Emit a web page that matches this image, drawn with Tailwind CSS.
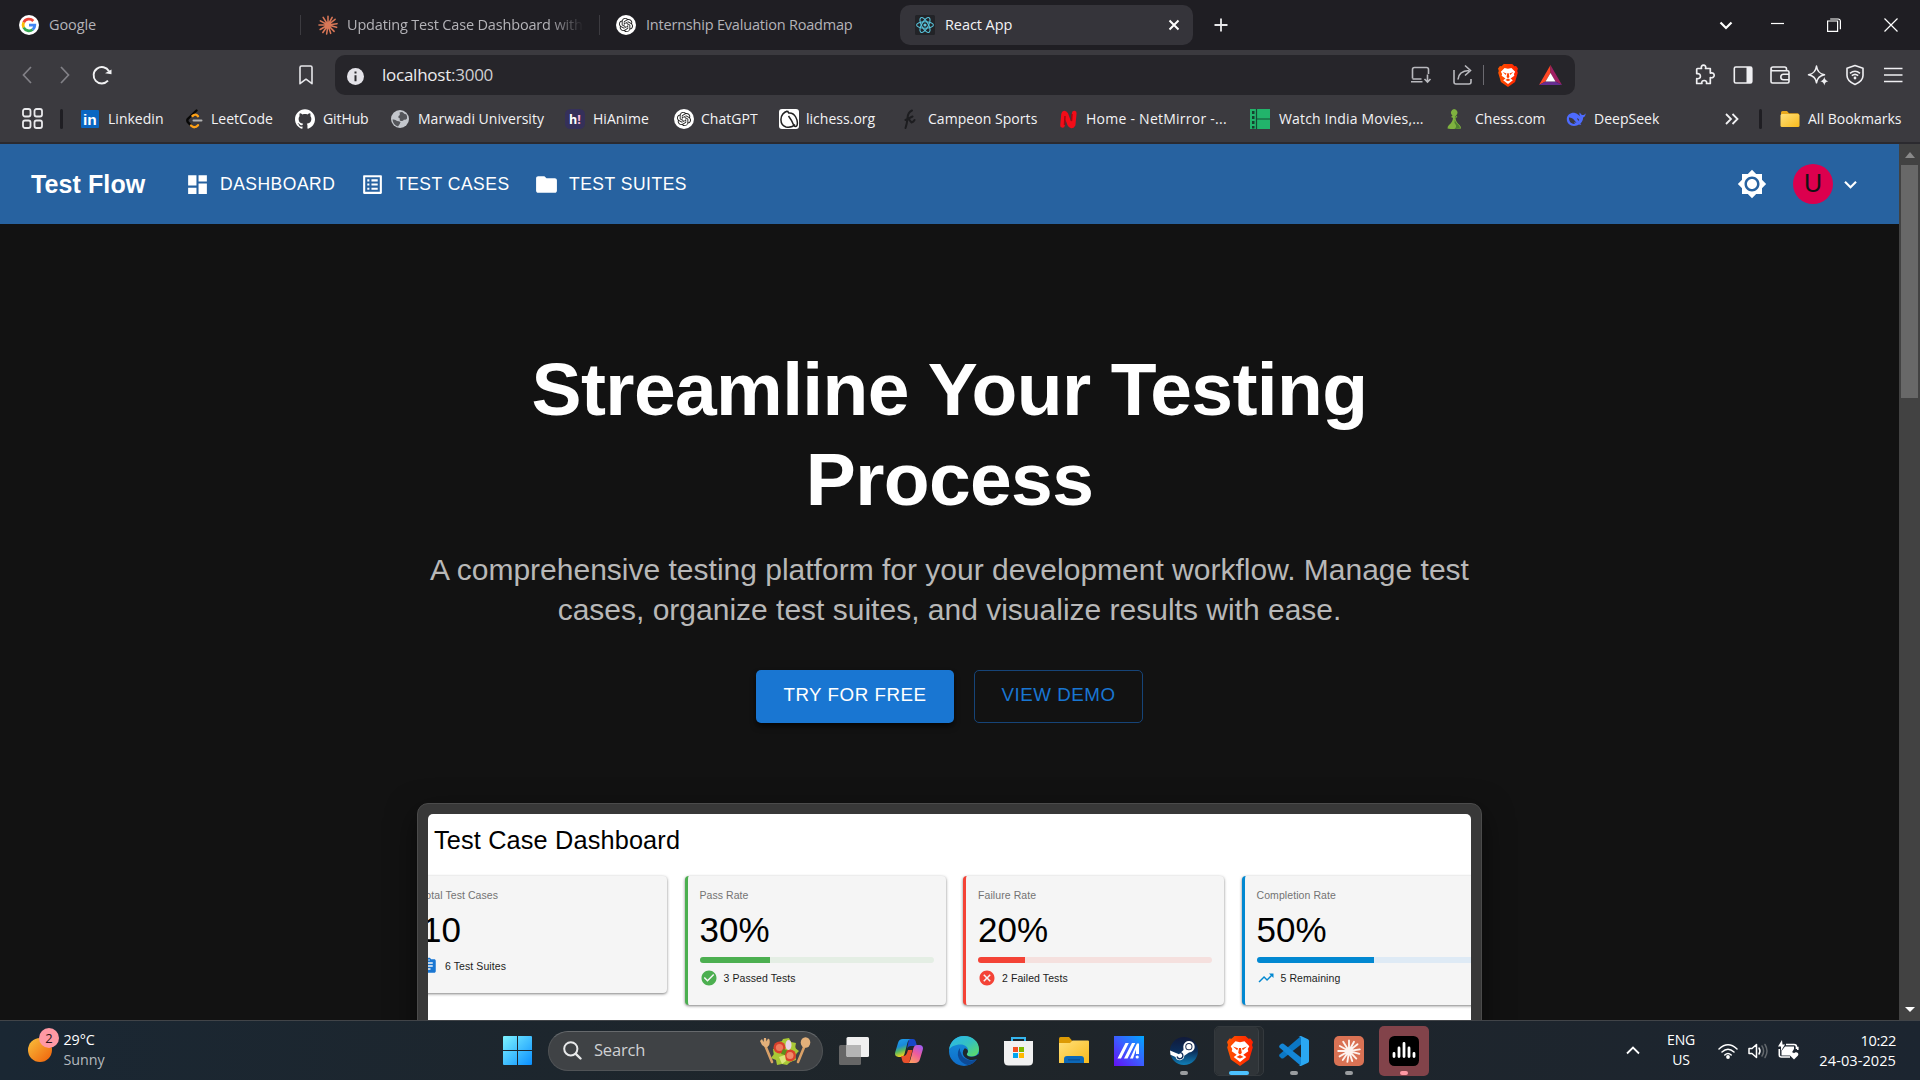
<!DOCTYPE html>
<html lang="en">
<head>
<meta charset="utf-8">
<title>React App</title>
<script src="https://cdn.jsdelivr.net/npm/@tailwindcss/browser@4"></script>
</head>
<body class="w-[1920px] h-[1080px] overflow-hidden bg-[#121212] flex flex-col font-['Open_Sans',sans-serif]">

<!-- Shared symbols -->
<svg class="absolute size-0">
  <defs>
    <linearGradient id="braveG" x1="0" y1="0" x2="1" y2="0"><stop offset="0" stop-color="#ff5500"/><stop offset="1" stop-color="#ff2000"/></linearGradient>
    <linearGradient id="winG" x1="0" y1="0" x2="1" y2="1"><stop offset="0" stop-color="#7df3ff"/><stop offset="1" stop-color="#0a8fff"/></linearGradient>
    <linearGradient id="sunG" x1="0" y1="0" x2="1" y2="1"><stop offset="0" stop-color="#f9c13c"/><stop offset="1" stop-color="#ef5f0a"/></linearGradient>
    <linearGradient id="edgeA" x1="0" y1="0" x2="1" y2="1"><stop offset="0" stop-color="#2ab7ef"/><stop offset=".5" stop-color="#35c1c0"/><stop offset="1" stop-color="#62e05a"/></linearGradient>
    <linearGradient id="edgeB" x1="0" y1="0" x2="0" y2="1"><stop offset="0" stop-color="#1590dc"/><stop offset="1" stop-color="#0f6cc8"/></linearGradient>
    <linearGradient id="copA" x1="0" y1="0" x2=".3" y2="1"><stop offset="0" stop-color="#1fa0f0"/><stop offset=".45" stop-color="#1b8ad8"/><stop offset=".7" stop-color="#57b860"/><stop offset="1" stop-color="#f3d21c"/></linearGradient>
    <linearGradient id="copB" x1=".8" y1="0" x2=".2" y2="1"><stop offset="0" stop-color="#a25cf0"/><stop offset=".45" stop-color="#ee5b9c"/><stop offset="1" stop-color="#ffa35c"/></linearGradient>
    <linearGradient id="maG" x1="0" y1="1" x2="1" y2="0"><stop offset="0" stop-color="#6410f4"/><stop offset=".5" stop-color="#3c5cff"/><stop offset="1" stop-color="#00a8ff"/></linearGradient>
    <linearGradient id="steamG" x1="0" y1="0" x2="0" y2="1"><stop offset="0" stop-color="#111a3a"/><stop offset=".5" stop-color="#0b2c58"/><stop offset="1" stop-color="#1080b8"/></linearGradient>
    <linearGradient id="foldG" x1="0" y1="0" x2="1" y2="1"><stop offset="0" stop-color="#ffe07a"/><stop offset="1" stop-color="#f8ba1c"/></linearGradient>
    <symbol id="openai" viewBox="-5 -5 34 34"><circle cx="12" cy="12" r="17" fill="#fff"/><path fill="#222" d="M22.2819 9.8211a5.9847 5.9847 0 0 0-.5157-4.9108 6.0462 6.0462 0 0 0-6.5098-2.9A6.0651 6.0651 0 0 0 4.9807 4.1818a5.9847 5.9847 0 0 0-3.9977 2.9 6.0462 6.0462 0 0 0 .7427 7.0966 5.98 5.98 0 0 0 .511 4.9107 6.051 6.051 0 0 0 6.5146 2.9001A5.9847 5.9847 0 0 0 13.2599 24a6.0557 6.0557 0 0 0 5.7718-4.2058 5.9894 5.9894 0 0 0 3.9977-2.9001 6.0557 6.0557 0 0 0-.7475-7.0729zm-9.022 12.6081a4.4755 4.4755 0 0 1-2.8764-1.0408l.1419-.0804 4.7783-2.7582a.7948.7948 0 0 0 .3927-.6813v-6.7369l2.02 1.1686a.071.071 0 0 1 .038.052v5.5826a4.504 4.504 0 0 1-4.4945 4.4944zm-9.6607-4.1254a4.4708 4.4708 0 0 1-.5346-3.0137l.142.0852 4.783 2.7582a.7712.7712 0 0 0 .7806 0l5.8428-3.3685v2.3324a.0804.0804 0 0 1-.0332.0615L9.74 19.9502a4.4992 4.4992 0 0 1-6.1408-1.6464zM2.3408 7.8956a4.485 4.485 0 0 1 2.3655-1.9728V11.6a.7664.7664 0 0 0 .3879.6765l5.8144 3.3543-2.0201 1.1685a.0757.0757 0 0 1-.071 0l-4.8303-2.7865A4.504 4.504 0 0 1 2.3408 7.872zm16.5963 3.8558L13.1038 8.364 15.1192 7.2a.0757.0757 0 0 1 .071 0l4.8303 2.7913a4.4944 4.4944 0 0 1-.6765 8.1042v-5.6772a.79.79 0 0 0-.407-.667zm2.0107-3.0231l-.142-.0852-4.7735-2.7818a.7759.7759 0 0 0-.7854 0L9.409 9.2297V6.8974a.0662.0662 0 0 1 .0284-.0615l4.8303-2.7866a4.4992 4.4992 0 0 1 6.6802 4.66zM8.3065 12.863l-2.02-1.1638a.0804.0804 0 0 1-.038-.0567V6.0742a4.4992 4.4992 0 0 1 7.3757-3.4537l-.142.0805L8.704 5.459a.7948.7948 0 0 0-.3927.6813zm1.0976-2.3654l2.602-1.4998 2.6069 1.4998v2.9994l-2.5974 1.4997-2.6067-1.4997Z"/></symbol>
    <symbol id="burst" viewBox="0 0 24 24"><g stroke="currentColor" stroke-width="1.900" stroke-linecap="round"><path d="M12 12V1.500M12 12l5-9.200M12 12l8.500-6.800M12 12l10.800-1.600M12 12l10.300 2.800M12 12l7.300 7.600M12 12l3.200 10M12 12l-1.600 10.800M12 12l-6.200 9M12 12l-9.400 5.400M12 12H1.200M12 12L2.800 7M12 12L6.200 2.800"/></g></symbol>
    <symbol id="brave" viewBox="0 0 26 30"><path fill="url(#braveG)" d="M7.500 0h11l3 2.800 2-.3L26 6l-1 3 .8 2.500-3.600 12L13 30l-9.200-6.500L.2 11.500 1 9 0 6l2.500-3.500 2 .3z"/><path fill="#fff" d="M13 6.200l4.500-1 4.800 5-1.600 2.700.6 2.300-5 3.600 3 2.300L13 26l-6.300-4.900 3-2.300-5-3.600.6-2.300L3.700 10.200l4.800-5z"/><path fill="#ff4000" d="M6 10.500l5 1.800-.8 2zM20 10.500l-5 1.800.8 2zM12 12h2l.8 5-1.800 1.500L11.200 17zM9.500 21l3.500-2 3.500 2-3.500 1.500z"/></symbol>
  </defs>
</svg>

<!-- Tab strip -->
<div class="h-[50px] shrink-0 bg-[#1f1e23] flex items-center text-[14.5px] tracking-[-0.08px] text-[#b4b3b8] whitespace-nowrap">
  <div class="w-[300px] pl-[19px] flex items-center gap-2.5">
    <svg class="size-5" viewBox="0 0 20 20"><circle cx="10" cy="10" r="10" fill="#fff"/><g fill="none" stroke-width="2.800"><path stroke="#ea4335" d="M14.300 6A5.900 5.900 0 0 0 4.700 7.500"/><path stroke="#fbbc05" d="M4.700 7.400a5.900 5.900 0 0 0 0 5.200"/><path stroke="#34a853" d="M4.700 12.500a5.900 5.900 0 0 0 9 2"/><path stroke="#4285f4" d="M10 10.200h5.800a5.900 5.900 0 0 1-2.100 4.400"/></g></svg>
    <span>Google</span>
  </div>
  <div class="w-px h-5 bg-[#3c3b40]"></div>
  <div class="w-[298px] pl-[17px] flex items-center gap-[9px]">
    <svg class="size-5 text-[#d97757]"><use href="#burst"/></svg>
    <span class="w-[237px] overflow-hidden tracking-[-0.17px] mask-r-from-85%">Updating Test Case Dashboard with</span>
  </div>
  <div class="w-px h-5 bg-[#3c3b40]"></div>
  <div class="w-[300px] pl-4 flex items-center gap-2.5">
    <svg class="size-5"><use href="#openai"/></svg>
    <span class="tracking-[-0.2px]">Internship Evaluation Roadmap</span>
  </div>
  <div class="w-[293px] h-10 rounded-[10px] bg-[#35343a] pl-[15px] pr-3 flex items-center gap-2.5 text-[#f2f2f4]">
    <svg class="size-5" viewBox="0 0 20 20"><rect width="20" height="20" rx="1.500" fill="#222327"/><g fill="none" stroke="#58c4dc" stroke-width="1.100"><ellipse cx="10" cy="10" rx="8.400" ry="3.300"/><ellipse cx="10" cy="10" rx="8.400" ry="3.300" transform="rotate(60 10 10)"/><ellipse cx="10" cy="10" rx="8.400" ry="3.300" transform="rotate(120 10 10)"/></g><circle cx="10" cy="10" r="1.600" fill="#58c4dc"/></svg>
    <span class="grow">React App</span>
    <svg class="size-[14px]" viewBox="0 0 14 14"><path stroke="#fff" stroke-width="2" d="M2.500 2.500l9 9m0-9l-9 9"/></svg>
  </div>
  <svg class="ml-[21px] size-[14px]" viewBox="0 0 14 14"><path stroke="#e8e8ea" stroke-width="1.800" d="M7 .5v13M.5 7h13"/></svg>
  <div class="grow"></div>
  <svg class="mr-[38px] size-[14px]" viewBox="0 0 14 14"><path fill="none" stroke="#fff" stroke-width="2.200" d="M1.500 4.500L7 10l5.500-5.500"/></svg>
  <svg class="mr-[43px] w-[13px] h-[14px]" viewBox="0 0 13 14"><path stroke="#fff" stroke-width="1.200" d="M0 5.500h13"/></svg>
  <svg class="mr-[43px] size-[14px]" viewBox="0 0 14 14"><path fill="none" stroke="#fff" stroke-width="1.200" d="M.6 3h10v10.400H.6zM3.200 1h8a2.200 2.200 0 0 1 2.200 2.200v8"/></svg>
  <svg class="mr-[22px] size-[14px]" viewBox="0 0 14 14"><path stroke="#fff" stroke-width="1.200" d="M.5 .5l13 13m0-13l-13 13"/></svg>
</div>

<!-- Address toolbar -->
<div class="h-[50px] shrink-0 bg-[#3b3a3f] flex items-center">
  <svg class="ml-[22px] w-[10px] h-[18px]" viewBox="0 0 10 18"><path fill="none" stroke="#828187" stroke-width="1.700" d="M9 1L1.500 9 9 17"/></svg>
  <svg class="ml-[28px] w-[10px] h-[18px]" viewBox="0 0 10 18"><path fill="none" stroke="#828187" stroke-width="1.700" d="M1 1l7.500 8L1 17"/></svg>
  <svg class="ml-[22px] size-[20px]" viewBox="0 0 20 20"><path fill="none" stroke="#f1f1f3" stroke-width="1.900" d="M17 6.300A8.200 8.200 0 1 0 16 15.700"/><path fill="#f1f1f3" d="M19.500 4.500V9.300L13 8.200z"/></svg>
  <svg class="ml-[186px] w-[16px] h-[20px]" viewBox="0 0 16 20"><path fill="none" stroke="#e6e6ea" stroke-width="1.600" stroke-linejoin="round" d="M3.500 1h9Q14 1 14 2.500V18.700L8 14.200 2 18.700V2.500Q2 1 3.500 1z"/></svg>
  <div class="ml-[21px] w-[1240px] h-10 rounded-[10px] bg-[#26252a] flex items-center pl-[12px] pr-[13px]">
    <svg class="size-[17px] mt-0.5" viewBox="0 0 17 17"><circle cx="8.500" cy="8.500" r="8.500" fill="#e4e3e9"/><path stroke="#2d2c31" stroke-width="2" d="M8.500 3.500v2M8.500 7.200v6"/></svg>
    <span class="grow ml-[18px] text-[17px] tracking-[-0.25px] text-[#cfcfd2] whitespace-nowrap"><span class="text-[#ececee]">localhost</span>:3000</span>
    <svg class="w-[22px] h-[20px]" viewBox="0 0 22 20"><g fill="none" stroke="#b9b9be" stroke-width="1.600"><path d="M2.500 13.500v-9Q2.500 2.500 4.500 2.500h12Q18.500 2.500 18.500 4.500V9M1 16.800h11.500M2.500 14h9M17.500 9.500v7.500M14.500 14l3 3 3-3"/></g></svg>
    <svg class="ml-[20px] w-[22px] h-[22px]" viewBox="0 0 22 22"><path fill="none" stroke="#b9b9be" stroke-width="1.600" d="M2 6v12Q2 20 4 20h13Q19 20 19 18V15M6 15.500Q6.500 7 17 6.500M13 1.500l5.500 5-5.500 5"/></svg>
    <div class="ml-[9px] w-[1.500px] h-5 bg-[#6b6a70]"></div>
    <svg class="ml-[14px] w-[20px] h-[23px]"><use href="#brave"/></svg>
    <svg class="ml-[21px] w-[23px] h-[20px]" viewBox="0 0 23 20"><path fill="#ff4724" d="M11.500 0v8L6.500 16.500 0 20z"/><path fill="#9e1f63" d="M11.500 0L23 20l-6.500-3.500L11.500 8z"/><path fill="#662d91" d="M0 20l6.500-3.500h10L23 20z"/><path fill="#fff" d="M11.500 8l5 8.500h-10z"/></svg>
  </div>
  <div class="ml-[119px] flex items-center gap-[15.600px] text-[#efeff2]">
    <svg class="size-[22px]" viewBox="0 0 22 22"><path fill="none" stroke="currentColor" stroke-width="1.700" stroke-linejoin="round" d="M3.500 4.500h4c-.8-2.200.6-3.300 2-3.300s2.900 1.100 2 3.300h4.800v4.600c2.400-.8 3.900.5 3.900 2.200s-1.500 3-3.900 2.200v6H12.500c.6-2-.7-3-2.300-3s-3 1-2.300 3H2.700v-4.800c2.800.4 3.700-.9 3.700-2.500S5.300 9.200 2.700 9.700V5.300q0-.8.8-.8z"/></svg>
    <svg class="size-[22px]" viewBox="0 0 22 22"><rect x="2.300" y="3" width="17.500" height="16" rx="1.500" fill="none" stroke="currentColor" stroke-width="1.600"/><path fill="currentColor" d="M14.500 3h5v16h-5z"/></svg>
    <svg class="size-[22px]" viewBox="0 0 22 22"><path fill="none" stroke="currentColor" stroke-width="1.600" d="M17.500 6.800V5Q17.500 3 15.500 3H4Q2 3 2 5v12.500q0 1.500 1.500 1.500h15q1.500 0 1.500-1.500V8.300q0-1.500-1.500-1.500H4Q2 6.800 2 5M20 10.300h-5.500a2.500 2.500 0 0 0 0 5.400H20"/></svg>
    <svg class="size-[22px]" viewBox="0 0 22 22"><path fill="none" stroke="currentColor" stroke-width="1.500" stroke-linejoin="round" d="M9.500 2q1 7.600 8 8.800-7 1.200-8 8-1-6.800-8-8Q8.500 9.600 9.500 2z"/><path fill="currentColor" d="M17.300 13q.6 3.600 4 4.200-3.400.6-4 4.200-.6-3.600-4-4.200 3.400-.6 4-4.200z"/></svg>
    <svg class="size-[22px]" viewBox="0 0 22 22"><g fill="none" stroke="currentColor" stroke-width="1.600"><path stroke-linejoin="round" d="M11 1.500l8 2.700v7.300q0 5.700-8 9-8-3.300-8-9V4.200z"/><path d="M6 9.300q5-4 10 0M7.800 11.700q3.200-2.600 6.400 0"/></g><circle cx="11" cy="14" r="1.400" fill="currentColor"/></svg>
    <svg class="w-[22px] h-[22px]" viewBox="0 0 22 22"><path stroke="currentColor" stroke-width="1.700" d="M2 4.500h18.500M2 11h18.500M2 17.500h18.500"/></svg>
  </div>
</div>

<!-- Bookmarks bar -->
<div class="h-[44px] shrink-0 bg-[#3b3a3f] border-b-2 border-[#2b2a2f] pb-[5px] flex items-center text-[14px] tracking-[0.02px] text-[#f3f3f5] whitespace-nowrap">
  <svg class="ml-[22px] size-[21px] shrink-0" viewBox="0 0 21 21"><g fill="none" stroke="#e9e9ec" stroke-width="1.800"><rect x="1" y="1" width="7.500" height="7.500" rx="2"/><rect x="12.500" y="1" width="7.500" height="7.500" rx="2"/><rect x="1" y="12.500" width="7.500" height="7.500" rx="2"/><rect x="12.500" y="12.500" width="7.500" height="7.500" rx="2"/></g></svg>
  <div class="ml-[17px] w-[3px] h-5 rounded bg-[#1f1e23] mr-[17px]"></div>
  <div class="w-[105px] flex items-center gap-[8px]"><svg class="size-5 shrink-0" viewBox="0 0 20 20"><rect x="1" y="1" width="18" height="18" rx="1" fill="#0a66c2"/><text x="3" y="16" font-family="Liberation Sans" font-weight="700" font-size="15.500" fill="#fff">in</text></svg><span>Linkedin</span></div>
  <div class="w-[110px] flex items-center gap-[6px]"><svg class="size-5 shrink-0" viewBox="0 0 20 20"><g fill="none" stroke-width="2.400" stroke-linecap="round"><path stroke="#070706" d="M11.500 1.500L2.800 10q-1 1.500 0 3l2.500 2.700"/><path stroke="#ffa116" d="M6 16.500q3.500 3.500 7-.3M7.500 7q3-2.800 5.500.2"/><path stroke="#b3b3b3" stroke-width="2" d="M8.500 11.500h8"/></g></svg><span>LeetCode</span></div>
  <div class="w-[95px] flex items-center gap-[8px]"><svg class="size-5 shrink-0" viewBox="0 0 24 24"><path fill="#fff" d="M12 .297c-6.630 0-12 5.373-12 12 0 5.303 3.438 9.800 8.205 11.385.6.113.82-.258.82-.577 0-.285-.01-1.040-.015-2.040-3.338.724-4.042-1.610-4.042-1.610C4.422 18.070 3.633 17.700 3.633 17.700c-1.087-.744.084-.729.084-.729 1.205.084 1.838 1.236 1.838 1.236 1.070 1.835 2.809 1.305 3.495.998.108-.776.417-1.305.76-1.605-2.665-.3-5.466-1.332-5.466-5.930 0-1.310.465-2.380 1.235-3.220-.135-.303-.54-1.523.105-3.176 0 0 1.005-.322 3.300 1.230.96-.267 1.980-.399 3-.405 1.020.006 2.040.138 3 .405 2.280-1.552 3.285-1.230 3.285-1.230.645 1.653.24 2.873.12 3.176.765.840 1.230 1.910 1.230 3.220 0 4.610-2.805 5.625-5.475 5.920.42.360.81 1.096.81 2.220 0 1.606-.015 2.896-.015 3.286 0 .315.21.690.825.570C20.565 22.092 24 17.592 24 12.297c0-6.627-5.373-12-12-12"/></svg><span class="tracking-[-0.1px]">GitHub</span></div>
  <div class="w-[175px] flex items-center gap-[8px]"><svg class="size-5 shrink-0" viewBox="0 0 20 20"><circle cx="10" cy="10" r="9" fill="#c3c6cc"/><path fill="#55565b" d="M9.500 3.500q3-1 4 .5t2.500 1q1.500 1.500 1 4.500-1.500 2-3 1-1 2-3 1.500-2-.5-1-2.500-2 0-1.500-2.500 2-.5 1-3.500zM2.500 10.500q3-.5 4.500 1.500 2 0 3.500 1-.5 2.500-2.500 4.500-5-1.500-5.500-7z"/></svg><span>Marwadi University</span></div>
  <div class="w-[109px] flex items-center gap-[8px]"><svg class="size-5 shrink-0" viewBox="0 0 20 20"><rect width="20" height="20" rx="5.500" fill="#35305a"/><text x="4" y="14.500" font-family="Open Sans" font-weight="700" font-size="12.500" fill="#fff">h<tspan fill="#ffbade">!</tspan></text></svg><span>HiAnime</span></div>
  <div class="w-[105px] flex items-center gap-[7px]"><svg class="size-5 shrink-0"><use href="#openai"/></svg><span>ChatGPT</span></div>
  <div class="w-[121px] flex items-center gap-[7px]"><svg class="size-5 shrink-0" viewBox="0 0 20 20"><rect width="20" height="20" rx="3" fill="#fff"/><path fill="none" stroke="#222" stroke-width="1.500" d="M8.500 2q-6 2-6.500 8t5 8q6 1 9-2.500M8.500 2l1.200 2q4.500-.5 7 4t1.300 8.500q-1.500 1.800-3 .2Q13 11.500 9.500 7"/></svg><span>lichess.org</span></div>
  <div class="w-[158px] flex items-center gap-[8px]"><svg class="size-5 shrink-0" viewBox="0 0 20 20"><path fill="none" stroke="#1d1d20" stroke-width="2" stroke-linecap="round" d="M12 1.500Q8 3 7.500 9T5.500 19M5.500 11l7-3.500M9 10.500l2.500 3q2-.5 3-2.500"/></svg><span class="tracking-[0.05px]">Campeon Sports</span></div>
  <div class="w-[192px] flex items-center gap-[8px]"><svg class="size-5 shrink-0" viewBox="0 0 20 20"><path fill="none" stroke="#f30c18" stroke-width="4.600" stroke-linecap="round" d="M4.500 16.500l1-11q.8-3 2.500 0l3.500 9.500q2 3.500 3.700.5L16.300 4"/><path stroke="#a20610" stroke-width="1.500" d="M7 7l-.5 9M14 5l-.5 7"/></svg><span class="tracking-[0.25px]">Home - NetMirror -...</span></div>
  <div class="w-[195px] flex items-center gap-[9px]"><svg class="size-5 shrink-0" viewBox="0 0 20 20"><rect width="20" height="20" fill="#22b46b"/><path stroke="#164a35" stroke-width="1.200" d="M6.500 0v20M7 10h13"/><g fill="#14422e"><rect x="2" y="2" width="2.500" height="3"/><rect x="2" y="7" width="2.500" height="3"/><rect x="2" y="12" width="2.500" height="3"/><rect x="2" y="17" width="2.500" height="2.500"/></g></svg><span class="tracking-[0.15px]">Watch India Movies,...</span></div>
  <div class="w-[121px] flex items-center gap-[10px]"><svg class="size-5 shrink-0" viewBox="0 0 20 20"><path fill="#7fb23f" d="M9 0a3.600 3.600 0 0 1 2 6.500l1.500 1.500-2 1q.3 4 4 7 1.500 1 1.500 3.500-6.500 1.500-13.500 0 0-2.500 1.500-3.500 3.700-3 4-7l-2-1 1.500-1.500A3.600 3.600 0 0 1 9 0z"/><path fill="#4f8130" d="M10 6.500l1.500 1.500-2 1q.3 4 4 7 1.500 1 1.500 3.500l-6 .7q4-2.500.5-6.200z"/></svg><span>Chess.com</span></div>
  <div class="w-[159px] flex items-center gap-[8px]"><svg class="size-5 shrink-0" viewBox="0 0 20 20"><path fill="#4d6bfe" d="M19.600 4.300c-1 1.500-2 1.700-2.500 1.700-1.300.2-2-.5-2.600-1.500-.3-.7-.8-1-1-.4-.3 1 .2 2.600 1 3.400-1.500-1-3.500-3-5.500-3.500C5.500 3.200 1 5.500.8 9.800.6 14.200 4 17 8 17c2.400 0 3.700-.8 5-1.500 1.200.5 2.600.3 2.200 0-.6-.4-.7-.7-.8-1 1.800-1.700 2.700-3.500 2.700-6 1.600-.5 2.600-2 2.500-4.200z"/><path fill="#3b3a3f" d="M3 8.500c3-.3 6 3 7.500 5.500-1-.2-1.700-.8-2.200-.7-.6.2.5 1.200 1 1.500C5 15.500 2.700 12 3 8.500zM11 9.300c1.500.2 2.500 1.500 2 2.500-.8.2-1.500-1-2-2.500z"/></svg><span>DeepSeek</span></div>
  <svg class="w-[14px] h-[12px] shrink-0" viewBox="0 0 14 12"><path fill="none" stroke="#f1f1f3" stroke-width="1.800" d="M1 1l5 5-5 5M7.500 1l5 5-5 5"/></svg>
  <div class="ml-[20px] mr-[18px] w-[3px] h-5 rounded bg-[#1f1e23]"></div>
  <svg class="w-[20px] h-[18px] shrink-0" viewBox="0 0 20 18"><path fill="#e8a91e" d="M1 2.500Q1 1 2.500 1H7l2 2.200h8.500Q19 3.200 19 5v4H1z"/><rect x=".5" y="4" width="19" height="13" rx="1.500" fill="url(#foldG)"/></svg>
  <span class="ml-[8px]">All Bookmarks</span>
</div>

<!-- Page viewport -->
<div class="h-[876px] flex shrink-0 overflow-hidden font-['Liberation_Sans',Arial,sans-serif]">
  <div class="w-[1899px] h-full overflow-hidden bg-[#121212]">
    <header class="h-20 bg-[#2762a0] text-white flex items-center pl-[31px] pr-[36px]">
      <span class="w-[154px] text-[25px] leading-8 font-bold tracking-[0.1px] whitespace-nowrap">Test Flow</span>
      <nav class="flex text-[17.5px] tracking-[0.5px] whitespace-nowrap">
        <a class="w-[175px] flex items-center gap-[10px]"><svg class="size-[25px]" viewBox="0 0 24 24"><path fill="#fff" d="M3 13h8V3H3v10zm0 8h8v-6H3v6zm10 0h8V11h-8v10zm0-18v6h8V3h-8z"/></svg>DASHBOARD</a>
        <a class="w-[174px] flex items-center gap-[11px]"><svg class="size-[25px]" viewBox="0 0 24 24"><path fill="#fff" d="M19 5v14H5V5h14m1.100-2H3.900c-.5 0-.9.4-.9.9v16.200c0 .4.4.9.9.9h16.200c.4 0 .9-.5.9-.9V3.900c0-.5-.5-.9-.9-.9zM11 7h6v2h-6V7zm0 4h6v2h-6v-2zm0 4h6v2h-6zM7 7h2v2H7zm0 4h2v2H7zm0 4h2v2H7z"/></svg>TEST CASES</a>
        <a class="flex items-center gap-[10px]"><svg class="size-[25px]" viewBox="0 0 24 24"><path fill="#fff" d="M10 4H4c-1.100 0-1.990.9-1.990 2L2 18c0 1.100.9 2 2 2h16c1.100 0 2-.9 2-2V8c0-1.100-.9-2-2-2h-8l-2-2z"/></svg>TEST SUITES</a>
      </nav>
      <div class="grow"></div>
      <svg class="size-[30px]" viewBox="0 0 24 24"><path fill="#fff" d="M20 8.690V4h-4.690L12 .69 8.690 4H4v4.690L.69 12 4 15.310V20h4.690L12 23.310 15.310 20H20v-4.690L23.310 12 20 8.690zM12 18c-3.310 0-6-2.690-6-6s2.690-6 6-6 6 2.690 6 6-2.690 6-6 6zm0-10c-2.210 0-4 1.790-4 4s1.790 4 4 4 4-1.790 4-4-1.790-4-4-4z"/></svg>
      <div class="ml-[26px] size-10 rounded-full bg-[#dc004e] text-[#121212] text-[25px] flex items-center justify-center">U</div>
      <svg class="ml-[5px] size-[25px]" viewBox="0 0 24 24"><path fill="#fff" d="M7.410 8.590 12 13.170l4.590-4.580L18 10l-6 6-6-6 1.410-1.410z"/></svg>
    </header>

    <main class="flex flex-col items-center pt-[120px]">
      <h1 class="w-[1000px] text-center text-white font-bold text-[75px] leading-[90px] tracking-[-0.625px]">Streamline Your Testing<br>Process</h1>
      <p class="mt-[26px] text-center text-[30px] leading-[40px] text-[#b8b8b8] whitespace-nowrap">A comprehensive testing platform for your development workflow. Manage test<br>cases, organize test suites, and visualize results with ease.</p>
      <div class="mt-10 flex gap-5 text-[18.750px] tracking-[0.53px]">
        <a class="w-[198px] h-[53px] rounded-[5px] bg-[#1976d2] text-white pb-[2px] flex items-center justify-center shadow-md shadow-black/60">TRY FOR FREE</a>
        <a class="w-[169px] h-[53px] rounded-[5px] border border-[#164478] text-[#1976d2] pb-[2px] flex items-center justify-center">VIEW DEMO</a>
      </div>

      <section class="mt-20 w-[1065px] h-[500px] shrink-0 rounded-[11px] border border-[#4b4b4b] bg-[#383838] p-[10px] shadow-[0_10px_30px_rgba(0,0,0,0.5)]">
        <div class="h-full rounded-[5px] bg-white overflow-hidden text-black">
          <h2 class="pl-[6px] pt-[10px] text-[25.300px] leading-[32px] tracking-[0.15px] whitespace-nowrap">Test Case Dashboard</h2>
          <div class="mt-[20px] -ml-[21px] flex items-start gap-[17.500px] whitespace-nowrap">
            <div class="w-[260px] h-[117px] shrink-0 rounded-[4px] bg-[#f5f5f5] pl-[13px] pt-[12px] shadow-[0_1px_3px_rgba(0,0,0,0.5)]">
              <div class="text-[10.500px] leading-[14px] tracking-[0.08px] text-[#737373]">Total Test Cases</div>
              <div class="mt-[7px] pl-[2px] text-[35px] leading-[42px]">10</div>
              <div class="mt-[6px] flex items-center gap-[7px] text-[10.500px] leading-4 tracking-[0.08px] text-[#1c1c1c]"><svg class="size-[18px]" viewBox="0 0 24 24"><path fill="#1976d2" d="M19 3h-4.180C14.400 1.840 13.300 1 12 1c-1.300 0-2.400.84-2.820 2H5c-1.100 0-2 .9-2 2v14c0 1.100.9 2 2 2h14c1.100 0 2-.9 2-2V5c0-1.100-.9-2-2-2zm-7 0c.55 0 1 .45 1 1s-.45 1-1 1-1-.45-1-1 .45-1 1-1zm2 14H7v-2h7v2zm3-4H7v-2h10v2zm0-4H7V7h10v2z"/></svg>6 Test Suites</div>
            </div>
            <div class="w-[261px] h-[129px] shrink-0 rounded-[4px] bg-[#f5f5f5] border-l-[3px] border-[#4caf50] pl-[12px] pr-[12px] pt-[12px] shadow-[0_1px_3px_rgba(0,0,0,0.5)]">
              <div class="text-[10.500px] leading-[14px] tracking-[0.05px] text-[#737373]">Pass Rate</div>
              <div class="mt-[7px] text-[35px] leading-[42px]">30%</div>
              <div class="mt-[6px] h-[6px] rounded-full bg-[#e4eee4] overflow-hidden"><div class="h-full w-[30%] bg-[#4caf50]"></div></div>
              <div class="mt-[6px] flex items-center gap-[6px] text-[10.500px] leading-4 tracking-[0.08px] text-[#1c1c1c]"><svg class="size-[18px]" viewBox="0 0 24 24"><path fill="#4caf50" d="M12 2C6.480 2 2 6.480 2 12s4.480 10 10 10 10-4.480 10-10S17.520 2 12 2zm-2 15-5-5 1.410-1.410L10 14.170l7.590-7.590L19 8l-9 9z"/></svg>3 Passed Tests</div>
            </div>
            <div class="w-[261px] h-[129px] shrink-0 rounded-[4px] bg-[#f5f5f5] border-l-[3px] border-[#f44336] pl-[12px] pr-[12px] pt-[12px] shadow-[0_1px_3px_rgba(0,0,0,0.5)]">
              <div class="text-[10.500px] leading-[14px] tracking-[0.08px] text-[#737373]">Failure Rate</div>
              <div class="mt-[7px] text-[35px] leading-[42px]">20%</div>
              <div class="mt-[6px] h-[6px] rounded-full bg-[#f5e0de] overflow-hidden"><div class="h-full w-[20%] bg-[#f44336]"></div></div>
              <div class="mt-[6px] flex items-center gap-[6px] text-[10.500px] leading-4 tracking-[0.08px] text-[#1c1c1c]"><svg class="size-[18px]" viewBox="0 0 24 24"><path fill="#f44336" d="M12 2C6.470 2 2 6.470 2 12s4.470 10 10 10 10-4.470 10-10S17.530 2 12 2zm5 13.590L15.590 17 12 13.410 8.410 17 7 15.590 10.590 12 7 8.410 8.410 7 12 10.590 15.590 7 17 8.410 13.410 12 17 15.590z"/></svg>2 Failed Tests</div>
            </div>
            <div class="w-[261px] h-[129px] shrink-0 rounded-[4px] bg-[#f5f5f5] border-l-[3px] border-[#0288d1] pl-[12px] pr-[12px] pt-[12px] shadow-[0_1px_3px_rgba(0,0,0,0.5)]">
              <div class="text-[10.500px] leading-[14px] tracking-[0.08px] text-[#737373]">Completion Rate</div>
              <div class="mt-[7px] text-[35px] leading-[42px]">50%</div>
              <div class="mt-[6px] h-[6px] rounded-full bg-[#deeaf5] overflow-hidden"><div class="h-full w-[50%] bg-[#0288d1]"></div></div>
              <div class="mt-[6px] flex items-center gap-[6px] text-[10.500px] leading-4 tracking-[0.08px] text-[#1c1c1c]"><svg class="size-[18px]" viewBox="0 0 24 24"><path fill="#0288d1" d="m16 6 2.290 2.290-4.880 4.880-4-4L2 16.590 3.410 18l6-6 4 4 6.300-6.290L22 12V6z"/></svg>5 Remaining</div>
            </div>
          </div>
        </div>
      </section>
    </main>
  </div>
  <!-- Scrollbar -->
  <div class="w-[21px] h-full bg-[#424242] flex flex-col items-center">
    <svg class="mt-[8px] w-[10px] h-[6px]" viewBox="0 0 10 6"><path fill="#8a8a8a" d="M5 0l5 6H0z"/></svg>
    <div class="mt-[7px] w-[17px] h-[233px] bg-[#686868]"></div>
    <div class="grow"></div>
    <svg class="mb-[8px] w-[10px] h-[5px]" viewBox="0 0 10 5"><path fill="#fff" d="M0 0h10L5 5z"/></svg>
  </div>
</div>

<!-- Taskbar -->
<footer class="h-[60px] shrink-0 border-t border-[#414448] bg-linear-to-r from-[#1a2733] via-[#1f2529] to-[#1c2530] flex items-center text-white whitespace-nowrap">
  <div class="ml-[28px] w-[475px] flex items-center">
    <div class="relative size-[25px]">
      <svg class="size-6" viewBox="0 0 24 24"><circle cx="12" cy="12" r="12" fill="url(#sunG)"/></svg>
      <span class="absolute left-[11px] -top-[10px] size-5 rounded-full bg-[#ff99a4] text-[#2a1416] text-[13px] leading-5 text-center">2</span>
    </div>
    <div class="ml-[10.500px] pb-px text-[14.300px] leading-5 tracking-[-0.05px]"><div>29°C</div><div class="text-[#b4b9be]">Sunny</div></div>
  </div>
  <svg class="w-[29px] h-[29px]" viewBox="0 0 29 29"><path fill="url(#winG)" d="M1 0h13v14H0V1q0-1 1-1zM15 0h13q1 0 1 1v13H15zM0 15h14v14H1q-1 0-1-1zM15 15h14v13q0 1-1 1H15z"/></svg>
  <div class="ml-4 w-[275px] h-10 rounded-full bg-[#3f4245] border border-[#505356] border-t-[#66696c] flex items-center pl-[14px] pr-[11px]">
    <svg class="w-[19px] h-[19px]" viewBox="0 0 19 19"><circle cx="7.800" cy="7.800" r="6.600" fill="none" stroke="#e8e9ea" stroke-width="2"/><path stroke="#e8e9ea" stroke-width="2.400" stroke-linecap="round" d="M12.800 12.800l4.700 4.700"/></svg>
    <span class="grow ml-[12px] text-[16.500px] tracking-[-0.2px] text-[#cfd1d3]">Search</span>
    <svg class="w-[52px] h-[28px]" viewBox="0 0 52 28"><g stroke="#d9a067" stroke-width="2.600" stroke-linecap="round"><path d="M6 8l7 17M46 8l-7 17"/></g><path fill="#e3b07a" d="M1 4l2-2 1.500 3L5 1l2 0 .5 3.500L9 1.500l1.500 1q1 6-2 7.500-5 1-7.500-6z"/><ellipse cx="46.500" cy="5.500" rx="4.800" ry="5.200" fill="#e3b07a"/><circle cx="26" cy="15" r="11.500" fill="#8fae22"/><path fill="#a9c836" d="M24 2l6-1 2 4 5 1-1 5 4 3-4 4 1 5-6 2-3 3-5-1-5 1-1-5-5-2 3-4-1-5 6-2z"/><circle cx="20.500" cy="10.500" r="6" fill="#d9412b"/><circle cx="20.500" cy="10.500" r="3.600" fill="#ee7a5c"/><circle cx="31" cy="18.500" r="6" fill="#d9412b"/><circle cx="31" cy="18.500" r="3.500" fill="#f08a6a"/><ellipse cx="29.500" cy="8" rx="3" ry="5" fill="#e8d3e4"/><path fill="#5f8f1a" d="M24 12l4 1-2 5-4-1z"/><path fill="#dbe87a" d="M20 20l6-2 1 6-4 3z"/></svg>
  </div>
  <svg class="ml-[16px] w-[30px] h-[28px]" viewBox="0 0 30 28"><rect x="0" y="8" width="22" height="20" rx="1.500" fill="#666"/><rect x="7.500" y="0" width="22.500" height="20" rx="1.500" fill="#f0f0f0"/><path fill="#b5b5b5" d="M7.500 8H22v12H9q-1.500 0-1.500-1.500z"/></svg>
  <svg class="ml-[26px] w-[28px] h-[26px]" viewBox="0 0 28 26"><path fill="#1848c8" d="M14 1h4q2 0 2.600 2L22 8h-6q-3 0-4 3z"/><path fill="url(#copA)" d="M8 1h8q-2.500 0-3.500 3.500L9.500 16q-1 3-3.500 3H3.500Q-1 18.500.3 14L3 5q1-4 5-4z"/><path fill="url(#copB)" d="M20 25h-8q2.500 0 3.500-3.500L18.500 10q1-3 3.500-3h2.500q4.500.5 3.200 5L25 21q-1 4-5 4z"/><path fill="#e8502c" d="M14 25h-4q-2 0-2.600-2L6 18h3q2 0 3-3l1-3h4.500L15 21.500q-.5 2.500-1 3.500z"/></svg>
  <svg class="ml-[26px] w-[30px] h-[30px]" viewBox="0 0 30 30"><circle cx="15" cy="15" r="15" fill="url(#edgeB)"/><path fill="url(#edgeA)" d="M0 14C1 5.500 7 0 15 0c9 0 15 6 15 13 0 5-3.500 7.500-7.500 7.500-3.500 0-4.800-1.200-4.800-2.300 0-.8 1.300-1.500 1.300-4 0-3-3-5.600-7.500-5.600C6 8.600 1.500 11 0 14z"/><path fill="#0d4a96" d="M11 12q-3.500 4-1.500 9.500T18.500 29q6-.5 9.500-6-5 2.500-10 .5T12 17q-1.500-2.500-1-5z"/><path fill="#1f262b" d="M17.800 18.200c0 1.100 1.300 2.500 5 2.500 2.800 0 5-1 6.200-2.400L31 18l-1.500 5-1.500 0q-5 2-9 .2-5-2.200-5.200-6.500 0-3 2-4.500Q19 13 18.900 15.500c-.1 1.400-1.100 1.900-1.100 2.700z"/></svg>
  <svg class="ml-[25px] w-[29px] h-[30px]" viewBox="0 0 29 30"><path fill="none" stroke="#35b5ee" stroke-width="2" d="M8 6V2h13v4"/><path fill="#f1f1f1" d="M0 5h29v20q0 4.500-4.500 4.500h-20Q0 29.500 0 25z"/><path fill="#f25022" d="M9 11h5v5H9z"/><path fill="#7fba00" d="M15 11h5v5h-5z"/><path fill="#00a4ef" d="M9 17h5v5H9z"/><path fill="#ffb900" d="M15 17h5v5h-5z"/></svg>
  <svg class="ml-[26px] w-[30px] h-[27px]" viewBox="0 0 30 27"><path fill="#dc9a05" d="M0 1.500Q0 0 1.500 0H10l3 3.500V9H0z"/><path fill="url(#foldG)" d="M0 6h11l2.500-2.500H29q1 0 1 1V26H0z"/><path fill="#0c68b8" d="M5 26v-4q0-3 3-3h14q3 0 3 3v4z"/><path fill="#0a4f93" d="M9 22.200h12v1.300H9z"/></svg>
  <svg class="ml-[25px] w-[30px] h-[30px]" viewBox="0 0 30 30"><rect width="30" height="30" fill="url(#maG)"/><path fill="#fff" d="M3.500 22.500L11.500 7h3.300L7 22.500zM10 22.500L18 7h3.300l-7.800 15.500zM16 22.500L23 7.500h2V18h-3v-4.500l-3 9z"/><circle cx="23.200" cy="21" r="1.600" fill="#fff"/></svg>
  <div class="relative ml-[25px] size-[30px]">
    <svg class="size-[30px]" viewBox="0 0 30 30"><circle cx="15" cy="15" r="14" fill="url(#steamG)"/><path fill="#fff" d="M1 14.500l9 3.800 4.500-4.300-.2-3.500A5.700 5.700 0 1 1 20 16.500l-4.700 3.300A4.500 4.500 0 0 1 6.500 21L1.500 18.700z"/><circle cx="19.900" cy="10.700" r="3.600" fill="#1a2c50"/><circle cx="19.900" cy="10.700" r="2.600" fill="#fff"/><path fill="none" stroke="#12305c" stroke-width="1.300" d="M8 20.500a3 3 0 1 0 2.500-3.800"/></svg>
    <div class="absolute left-[11px] top-[35px] w-[8px] h-1 rounded-full bg-[#9a9da0]"></div>
  </div>
  <div class="relative ml-[15px] w-[50px] h-[50px] rounded-[5px] border border-[#34393d] bg-[#262b2f]">
    <div class="w-[44px] h-[48px] rounded-[5px] border-r border-[#3b4044] bg-[#2f3438] flex items-center justify-end pr-[5px]"><svg class="w-[26px] h-[30px]"><use href="#brave"/></svg></div>
    <div class="absolute left-[14px] top-[44px] w-5 h-1 rounded-full bg-[#4cc2ff]"></div>
  </div>
  <div class="relative ml-[15px] size-[30px]">
    <svg class="size-[30px]" viewBox="0 0 30 30"><path fill="#0b77c4" d="M22 0v8.500L4.500 22.300Q3 23 2 22L.5 20.500Q-.3 19.300.7 18.300z"/><path fill="#1486d6" d="M22 30v-8.500L4.500 7.700Q3 7 2 8L.5 9.500Q-.3 10.700.7 11.700z"/><path fill="#2aa7f2" d="M22 0l7 3.200q1 .5 1 1.800v20q0 1.300-1 1.800L22 30q-1.800.2-2.500-.8 2.500.8 2.500-1.600V2.400Q22 0 19.500.8 20.200-.2 22 0z"/></svg>
    <div class="absolute left-[11px] top-[35px] w-[8px] h-1 rounded-full bg-[#9a9da0]"></div>
  </div>
  <div class="relative ml-[25px] size-[30px]">
    <div class="size-[30px] rounded-[5px] bg-[#d97254] flex items-center justify-center"><svg class="size-[24px] text-[#fdf3ee]"><use href="#burst"/></svg></div>
    <div class="absolute left-[11px] top-[35px] w-[8px] h-1 rounded-full bg-[#9a9da0]"></div>
  </div>
  <div class="relative ml-[15px] size-[50px] rounded-[5px] bg-[#82434a] flex items-center justify-center">
    <svg class="size-[30px]" viewBox="0 0 30 30"><rect width="30" height="30" rx="5.500" fill="#000"/><path stroke="#fff" stroke-width="2.800" stroke-linecap="round" d="M5 20.500v-3M10 20.500V12M15 20.500V7.500M20 20.500V12M25 20.500v-3"/></svg>
    <div class="absolute left-[21px] top-[45px] w-[8px] h-1 rounded-full bg-[#ff99a4]"></div>
  </div>
  <div class="grow"></div>
  <svg class="w-[14px] h-[9px]" viewBox="0 0 14 9"><path fill="none" stroke="#fff" stroke-width="1.800" d="M1 7.500l6-6 6 6"/></svg>
  <div class="ml-[22px] w-[38px] pb-px text-center text-[14px] leading-5 tracking-[-0.2px]"><div>ENG</div><div>US</div></div>
  <svg class="ml-[18px] w-[20px] h-[18px]" viewBox="0 0 20 18"><g fill="none" stroke="#fff" stroke-width="1.500" stroke-linecap="round"><path d="M1 7q9-8.500 18 0M4 10q6-5.600 12 0M6.800 13q3.200-3 6.400 0"/></g><circle cx="10" cy="15" r="1.900" fill="#fff"/></svg>
  <svg class="ml-[10px] w-[21px] h-[16px]" viewBox="0 0 21 16"><g fill="none" stroke-width="1.500" stroke-linejoin="round" stroke-linecap="round"><path stroke="#fff" d="M1 5.500h3L8.500 1.500v13L4 10.500H1zM11 5q2 3 0 6"/><path stroke="#62676c" d="M14 3q3.200 5 0 10M17 1.500q4 6.500 0 13"/></g></svg>
  <svg class="ml-[9px] w-[21px] h-[21px]" viewBox="0 0 21 21"><path fill="none" stroke="#fff" stroke-width="1.600" d="M8 4.500h8q2.500 0 2.500 2.500v2M1.300 9v6q0 2 2 2H12M18.500 7.500h1.300v2.500"/><path fill="#fff" d="M7 6.500h9V9L12 15.500H3.500V11zM4 0L0 6.500h3V11l4-6.500H4.500zM16 19.500l-4-4q-1-2 .8-3t3.200.8q1.400-1.800 3.200-.8t.8 3z"/></svg>
  <div class="ml-[10px] mr-[24px] w-[87px] pb-px text-right text-[14.600px] leading-5 tracking-[0.05px]"><div class="tracking-[-0.35px]">10:22</div><div>24-03-2025</div></div>
</footer>
</body>
</html>
